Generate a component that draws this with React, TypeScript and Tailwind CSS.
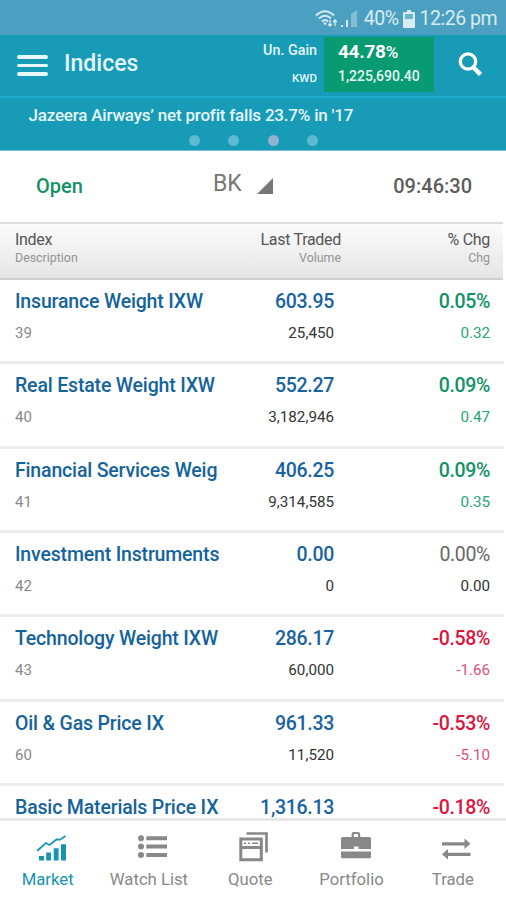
import type { ReactNode } from 'react'

interface IndexRow {
  name: string
  code?: string
  last: string
  volume?: string
  pct: string
  chg?: string
}

const ROWS: IndexRow[] = [
  { name: 'Insurance Weight IXW', code: '39', last: '603.95', volume: '25,450', pct: '0.05%', chg: '0.32' },
  { name: 'Real Estate Weight IXW', code: '40', last: '552.27', volume: '3,182,946', pct: '0.09%', chg: '0.47' },
  { name: 'Financial Services Weig', code: '41', last: '406.25', volume: '9,314,585', pct: '0.09%', chg: '0.35' },
  { name: 'Investment Instruments', code: '42', last: '0.00', volume: '0', pct: '0.00%', chg: '0.00' },
  { name: 'Technology Weight IXW', code: '43', last: '286.17', volume: '60,000', pct: '-0.58%', chg: '-1.66' },
  { name: 'Oil & Gas Price IX', code: '60', last: '961.33', volume: '11,520', pct: '-0.53%', chg: '-5.10' },
  { name: 'Basic Materials Price IX', last: '1,316.13', pct: '-0.18%' },
]

function trendColors(pct: string) {
  if (pct.startsWith('-')) return { pct: 'text-[#db1440] font-medium', chg: 'text-[#e0507a]' }
  if (pct === '0.00%') return { pct: 'text-[#666666] font-normal', chg: 'text-[#333333]' }
  return { pct: 'text-[#129264] font-medium', chg: 'text-[#2ba578]' }
}

function StatusBar() {
  return (
    <div className="flex h-[35px] shrink-0 items-center justify-end bg-[#4b9fc0] pt-[3px] pr-[9px] text-[19.5px] text-[#d8ecf4]">
      <svg width="43" height="20" viewBox="0 0 43 20" fill="none" stroke="currentColor" className="mr-[6px]">
        <path d="M1 6.500Q10-2 19 6.500M4 9.500Q10 4 16 9.500M7 12.500Q10 9.500 13 12.500" strokeWidth="1.8" />
        <path d="M8 13.500h4l-2 3z" fill="currentColor" stroke="none" />
        <path d="M15 11v6m-2-2l2 2 2-2M20 17v-6m-2 2l2-2 2 2" strokeWidth="1.3" />
        <path d="M26 16h2v2h-2zM31 11h2v7h-2z" fill="currentColor" stroke="none" />
        <path d="M36 5l6-4v17h-6z" fill="currentColor" stroke="none" opacity=".4" />
      </svg>
      <span className="tracking-[-0.5px]">40%</span>
      <svg width="12" height="18" viewBox="0 0 12 18" className="mr-[5px] ml-[4px]" fill="currentColor">
        <path d="M4 0h4v2h3q1 0 1 1v14q0 1-1 1H1q-1 0-1-1V3q0-1 1-1h3z" />
        <path d="M2 4h8v5H2z" fill="#70b3cd" />
      </svg>
      <span className="tracking-[-0.5px]">12:26 pm</span>
    </div>
  )
}

function Header() {
  return (
    <header className="flex h-[63px] shrink-0 border-b-2 border-[#1eadd0] bg-[#179bb7] text-white">
      <div className="flex flex-1 items-center pl-[17px]">
        <div className="flex flex-col gap-[5px]">
          <span className="h-[3.5px] w-[31px] rounded-sm bg-[#e8f8fc]" />
          <span className="h-[3.5px] w-[31px] rounded-sm bg-[#e8f8fc]" />
          <span className="h-[3.5px] w-[31px] rounded-sm bg-[#e8f8fc]" />
        </div>
        <h1 className="pb-[4px] pl-[16px] text-[23px] leading-7 font-medium text-[#e4f6fa]">Indices</h1>
      </div>
      <div className="flex w-[80px] flex-col pt-[6px] pr-[7px] text-right font-medium whitespace-nowrap text-[#e4f6fa]">
        <span className="text-[14.3px] leading-[18px]">Un. Gain</span>
        <span className="pt-[10px] text-[11.5px] leading-[18px]">KWD</span>
      </div>
      <div className="mt-[2px] h-[55px] w-[110px] bg-[#089b72] pl-[14px]">
        <div className="pt-[4px] text-[19px] leading-[22px] font-bold tracking-[-0.3px]">
          44.78<span className="text-[17px] font-medium">%</span>
        </div>
        <div className="pt-[3px] text-[14px] leading-[20px] font-medium text-[#e6f7f1]">1,225,690.40</div>
      </div>
      <div className="flex w-[72px] items-center justify-center pb-[3px]">
        <svg width="24" height="25" viewBox="0 0 24 25" fill="none" stroke="currentColor">
          <circle cx="10" cy="9.500" r="7.700" strokeWidth="3.300" />
          <path d="M15.500 15.500l7 7" strokeWidth="4.500" />
        </svg>
      </div>
    </header>
  )
}

function NewsTicker() {
  return (
    <div className="h-[53px] shrink-0 border-b border-[#74bdd3] bg-[#179bb7] pt-[7px]">
      <p className="pl-[28.5px] text-[17px] leading-[20px] font-medium tracking-[-0.2px] text-[#e4f6fa]">
        Jazeera Airways’ net profit falls 23.7% in '17
      </p>
      <div className="flex gap-[28.3px] pt-[10px] pl-[189px]">
        <span className="size-[11px] rounded-full bg-[#5ebad0]" />
        <span className="size-[11px] rounded-full bg-[#5ebad0]" />
        <span className="size-[11px] rounded-full bg-[#93b2d1]" />
        <span className="size-[11px] rounded-full bg-[#5ebad0]" />
      </div>
    </div>
  )
}

function MarketStatus() {
  return (
    <div className="flex h-[71px] shrink-0 items-center pr-[34px] pb-[2px] pl-[36px] text-[#5c5c5c]">
      <span className="w-[177px] text-[20px] font-medium text-[#129264]">Open</span>
      <span className="pb-[2px] text-[23px] text-[#777777]">BK</span>
      <svg width="16" height="16" viewBox="0 0 16 16" className="ml-[15px]">
        <path d="M16 0v16H0z" fill="#777777" />
      </svg>
      <span className="ml-auto text-[20px] font-medium">09:46:30</span>
    </div>
  )
}

function TableHead() {
  return (
    <div className="mr-[3px] flex h-[58px] shrink-0 border-t-2 border-b-2 border-t-[#dddddd] border-b-[#d0d0d0] bg-linear-to-b from-[#fbfbfb] to-[#e5e5e5] pt-[6px] pr-[13px] pl-[15px] text-[16px] leading-[20px] tracking-[-0.3px] text-[#555555]">
      <div className="w-[226px]">
        Index
        <div className="text-[12.4px] leading-[16px] tracking-normal text-[#949494]">Description</div>
      </div>
      <div className="w-[100px] text-right">
        Last Traded
        <div className="text-[12.4px] leading-[16px] tracking-normal text-[#949494]">Volume</div>
      </div>
      <div className="flex-1 text-right">
        % Chg
        <div className="text-[12.4px] leading-[16px] tracking-normal text-[#949494]">Chg</div>
      </div>
    </div>
  )
}

function Row({ row }: { row: IndexRow }) {
  const colors = trendColors(row.pct)
  return (
    <div className="mr-[2px] flex h-[84.35px] shrink-0 border-b-3 border-[#ececec] pt-[10px] pr-[14px] pl-[15px] text-[19.5px] leading-[24px] whitespace-nowrap">
      <div className="w-[219px]">
        <div className="font-medium tracking-[-0.17px] text-[#15639b]">{row.name}</div>
        {row.code && <div className="pt-[9px] text-[15px] leading-[20px] text-[#888888]">{row.code}</div>}
      </div>
      <div className="w-[100px] text-right">
        <div className="font-medium tracking-[-0.3px] text-[#1963a0]">{row.last}</div>
        {row.volume && <div className="pt-[9px] text-[15.2px] leading-[20px] text-[#333333]">{row.volume}</div>}
      </div>
      <div className="flex-1 text-right">
        <div className={`tracking-[-0.35px] ${colors.pct}`}>{row.pct}</div>
        {row.chg && <div className={`pt-[9px] text-[15.2px] leading-[20px] ${colors.chg}`}>{row.chg}</div>}
      </div>
    </div>
  )
}

function Tab({ label, active, children }: { label: string; active?: boolean; children: ReactNode }) {
  return (
    <div className={`flex w-[101.3px] shrink-0 flex-col items-center pt-[9px] ${active ? 'text-[#1794af]' : 'text-[#888888]'}`}>
      <svg width="40" height="33" viewBox="0 0 40 33" fill="currentColor">
        {children}
      </svg>
      <span className="pt-[6px] text-[16.7px] leading-[22px] whitespace-nowrap">{label}</span>
    </div>
  )
}

function BottomNav() {
  return (
    <nav className="-ml-[3px] flex h-[82px] shrink-0 border-t-3 border-[#e8e8e8] bg-white">
      <Tab label="Market" active>
        <path d="M11 26h5v4.500h-5zM18.200 22.500h4.800v8h-4.800zM25.700 18.300h4.900v12.200h-4.900zM33 14.300h5v16.200h-5z" />
        <path d="M9.200 20.700L18 13l3.500 2 7-5.500 3.500.2L37.500 6" fill="none" stroke="currentColor" strokeWidth="1.800" />
      </Tab>
      <Tab label="Watch List">
        <circle cx="12" cy="8.300" r="3" />
        <circle cx="12" cy="16.500" r="3" />
        <circle cx="12" cy="25" r="3" />
        <path d="M17.300 6.300H38v4H17.300zM17.300 14.500H38v4H17.300zM17.300 23H38v4H17.300z" />
      </Tab>
      <Tab label="Quote">
        <path d="M16.500 3.500h20v19" fill="none" stroke="currentColor" strokeWidth="2.700" />
        <path d="M10.800 9h20.500v20.700H10.800z" fill="none" stroke="currentColor" strokeWidth="3" />
        <path d="M11 17.500h20" stroke="currentColor" strokeWidth="3" />
        <path d="M14 13.200h2M18 13.200h2M22 13.200h6" stroke="currentColor" strokeWidth="1.600" />
      </Tab>
      <Tab label="Portfolio">
        <path d="M20.700 8V4.200q0-1.200 1.200-1.200h4q1.200 0 1.200 1.200V8" fill="none" stroke="currentColor" strokeWidth="2.200" />
        <path d="M10.500 7h27q1.500 0 1.500 1.500V19H26.500v-2.500H22V19H9V8.500Q9 7 10.500 7zM9 21.500h30v5.300q0 1.500-1.500 1.500h-27Q9 28.300 9 26.800z" />
      </Tab>
      <Tab label="Trade">
        <path d="M9 12.200h22.500V8.500l6 5.300-6 5.300v-3.700H9zM37.500 22.700H15V19l-6 5.300 6 5.300v-3.700h22.500z" />
      </Tab>
    </nav>
  )
}

export default function App() {
  return (
    <div className="flex h-[900px] w-[506px] flex-col overflow-hidden bg-white font-[Roboto,sans-serif]">
      <StatusBar />
      <Header />
      <NewsTicker />
      <MarketStatus />
      <TableHead />
      <main className="flex min-h-0 flex-1 flex-col overflow-hidden">
        {ROWS.map((row) => (
          <Row key={row.name} row={row} />
        ))}
      </main>
      <BottomNav />
    </div>
  )
}
